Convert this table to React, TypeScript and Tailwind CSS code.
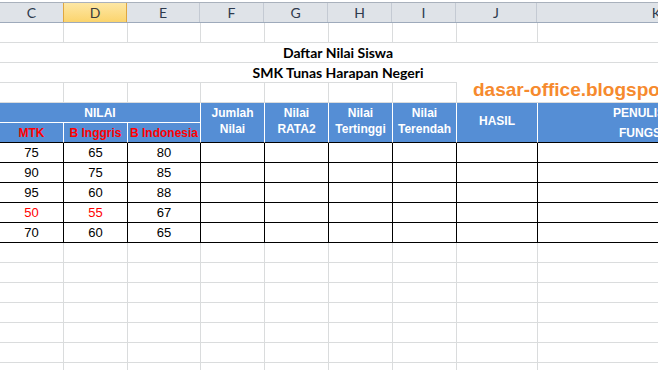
const heads = [
  { l: "C", w: "w-[64px]" },
  { l: "D", w: "w-[64px]", sel: true },
  { l: "E", w: "w-[73px]" },
  { l: "F", w: "w-[64px]" },
  { l: "G", w: "w-[64px]" },
  { l: "H", w: "w-[64px]" },
  { l: "I", w: "w-[64px]" },
  { l: "J", w: "w-[81px]" },
  { l: "K", w: "w-[240px]" },
];

const data: { v: string; red?: boolean }[][] = [
  [{ v: "75" }, { v: "65" }, { v: "80" }],
  [{ v: "90" }, { v: "75" }, { v: "85" }],
  [{ v: "95" }, { v: "60" }, { v: "88" }],
  [{ v: "50", red: true }, { v: "55", red: true }, { v: "67" }],
  [{ v: "70" }, { v: "60" }, { v: "65" }],
];

const Gray = () => <div className="border-r border-b border-[#dadcdd]" />;

const Blank = ({ n }: { n: number }) => (
  <>
    {Array.from({ length: n }).map((_, i) => (
      <Gray key={i} />
    ))}
  </>
);

const Head = ({ children }: { children: React.ReactNode }) => (
  <div className="row-span-2 bg-[#558ed5] border-r border-b border-r-white border-b-black flex items-center justify-center text-center text-white font-bold text-[12px] leading-[16px] pb-[3px]">
    {children}
  </div>
);

const Sub = ({ children }: { children: React.ReactNode }) => (
  <div className="bg-[#558ed5] border-r border-b border-r-white border-b-black flex items-center justify-center text-[#ff0000] font-bold text-[12px] whitespace-nowrap">
    {children}
  </div>
);

export default function App() {
  return (
    <div className="w-[658px] h-[370px] overflow-hidden bg-white font-['Liberation_Sans',Arial,sans-serif]">
      <div className="pt-[2px]">
        <div className="flex h-[21px] border-t border-b border-t-[#a9b1bc] border-b-[#9eaabb] bg-[#dfe3e8]">
          {heads.map((h) => (
            <div
              key={h.l}
              className={`${h.w} shrink-0 flex items-center justify-center border-r font-['Lato',sans-serif] text-[14px] ${
                h.sel
                  ? "bg-gradient-to-b from-[#fde7a4] to-[#fbd46c] border-[#e0a73f] border-l -ml-px text-[#3b3b3b]"
                  : "border-[#c4cad3] text-[#2e3a4d]"
              }`}
            >
              {h.l}
            </div>
          ))}
        </div>
      </div>

      <div className="grid grid-cols-[64px_64px_73px_64px_64px_64px_64px_81px_240px] auto-rows-[20px]">
        <Blank n={9} />

        <div className="col-span-9 border-b border-[#dadcdd] flex items-center justify-center pr-[102px] font-['Lato',sans-serif] font-bold text-[14px] text-black">
          Daftar Nilai Siswa
        </div>
        <div className="col-span-9 border-b border-[#dadcdd] flex items-center justify-center pr-[102px] font-['Lato',sans-serif] font-bold text-[14px] text-black">
          SMK Tunas Harapan Negeri
        </div>

        <Blank n={7} />
        <div className="col-span-2 relative border-b border-[#dadcdd]">
          <div className="absolute left-0 right-0 -top-px bottom-0 bg-white overflow-visible">
            <span className="absolute left-[16px] -top-[3px] whitespace-nowrap text-[19px] font-bold leading-[22px] text-[#f68a2e]">
              dasar-office.blogspot.com
            </span>
          </div>
        </div>

        <div className="col-span-3 bg-[#558ed5] border-r border-b border-white flex items-center justify-center text-white font-bold text-[12px]">
          NILAI
        </div>
        <Head>
          Jumlah
          <br />
          Nilai
        </Head>
        <Head>
          Nilai
          <br />
          RATA2
        </Head>
        <Head>
          Nilai
          <br />
          Tertinggi
        </Head>
        <Head>
          Nilai
          <br />
          Terendah
        </Head>
        <Head>HASIL</Head>
        <div className="row-span-2 bg-[#558ed5] border-r border-b border-r-white border-b-black flex flex-col justify-center text-white font-bold text-[12px] leading-[20px] whitespace-nowrap">
          <span className="pl-[75px]">PENULISAN</span>
          <span className="pl-[81px]">FUNGSI</span>
        </div>
        <Sub>MTK</Sub>
        <Sub>B Inggris</Sub>
        <Sub>B Indonesia</Sub>

        {data.map((row, r) =>
          Array.from({ length: 9 }).map((_, c) => (
            <div
              key={`${r}-${c}`}
              className={`border-r border-b border-black flex items-center justify-center text-[13px] ${
                row[c]?.red ? "text-[#ff0000]" : "text-black"
              }`}
            >
              {row[c]?.v ?? ""}
            </div>
          ))
        )}

        <Blank n={63} />
      </div>
    </div>
  );
}
